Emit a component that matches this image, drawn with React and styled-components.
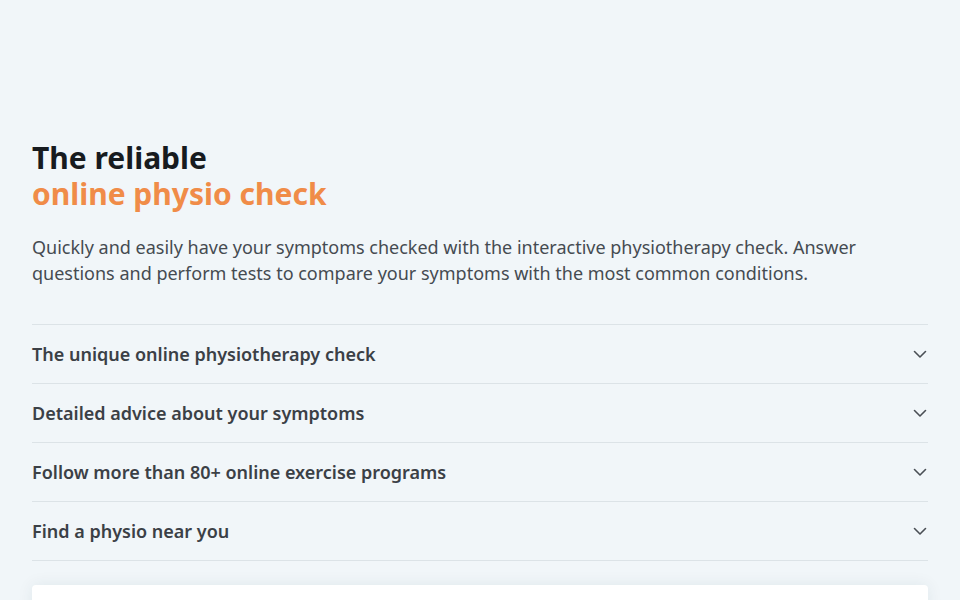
import React from "react";
import styled, { createGlobalStyle } from "styled-components";

const Global = createGlobalStyle`
  html, body { margin: 0; padding: 0; }
  body {
    background: #f1f6f9;
    font-family: "Noto Sans", "Open Sans", sans-serif;
    -webkit-font-smoothing: antialiased;
  }
`;

const Page = styled.main`
  padding: 140px 32px 0;
  box-sizing: border-box;
  overflow: hidden;
  height: 600px;
`;

const Title = styled.h1`
  margin: 0;
  font-size: 30px;
  line-height: 36px;
  font-weight: 700;
  color: #171b1f;
`;

const Accent = styled.span`
  display: block;
  color: #f08c48;
`;

const Lead = styled.p`
  margin: 22px 0 0;
  font-size: 18px;
  line-height: 26px;
  color: #454b51;
`;

const List = styled.ul`
  list-style: none;
  margin: 38px 0 0;
  padding: 0;
  border-top: 1px solid #dce3e7;
`;

const Item = styled.li`
  display: flex;
  align-items: center;
  justify-content: space-between;
  height: 58px;
  border-bottom: 1px solid #dce3e7;
  font-size: 18px;
  font-weight: 600;
  color: #3b4046;
`;

const Chevron = styled.svg`
  width: 16px;
  height: 16px;
  color: #4a4f55;
`;

const Card = styled.div`
  margin-top: 24px;
  height: 120px;
  background: #ffffff;
  border-radius: 4px;
  box-shadow: 0 0 16px rgba(30, 60, 80, 0.08);
`;

const items = [
  "The unique online physiotherapy check",
  "Detailed advice about your symptoms",
  "Follow more than 80+ online exercise programs",
  "Find a physio near you",
];

export default function App() {
  return (
    <>
      <Global />
      <Page>
        <Title>
          The reliable
          <Accent>online physio check</Accent>
        </Title>
        <Lead>
          Quickly and easily have your symptoms checked with the interactive physiotherapy check. Answer
          questions and perform tests to compare your symptoms with the most common conditions.
        </Lead>
        <List>
          {items.map((t) => (
            <Item key={t}>
              {t}
              <Chevron viewBox="0 0 16 16" fill="none" stroke="currentColor" strokeWidth="1.6" strokeLinecap="round" strokeLinejoin="round">
                <path d="M2.5 5.5 L8 11 L13.5 5.5" />
              </Chevron>
            </Item>
          ))}
        </List>
        <Card />
      </Page>
    </>
  );
}
